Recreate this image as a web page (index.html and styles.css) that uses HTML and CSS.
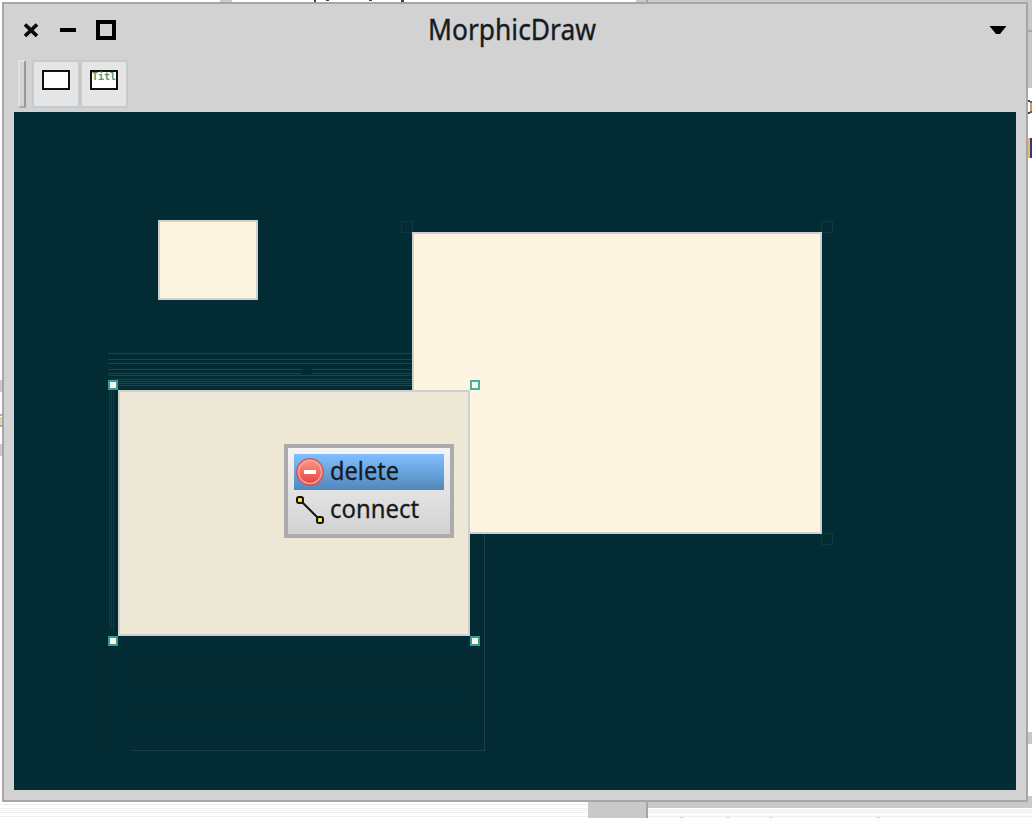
FILE: index.html
```html
<!DOCTYPE html>
<html lang="en">
<head>
<meta charset="utf-8">
<title>MorphicDraw</title>
<link rel="stylesheet" href="styles.css">
</head>
<body>
<main class="desktop">
  <svg class="backdrop" width="1032" height="818" shape-rendering="crispEdges">
    <path fill="#c9c9c9" d="M220 0h12v2h-12zM636 0h396v88h-396zM588 802h58v16h-58zM648 800h384v8h-384zM1028 796h4v12h-4zM1028 732h4v12h-4zM0 380h2v12h-2zM0 444h2v12h-2z"/>
    <path fill="#a6a6a6" d="M646 0h2v2h-2zM646 802h2v16h-2zM1028 30h4v2h-4z"/>
    <path fill="#fbfcfd" d="M648 808h384v10h-384z"/>
    <path fill="#efefef" d="M0 804h588v1H0zM0 808h588v1H0zM0 810h588v1H0zM0 812h588v1H0zM0 816h588v1H0zM648 810h384v1H648zM648 812h384v1H648zM648 816h384v1H648z"/>
    <path fill="#d5d9df" d="M680 817h4v1h-4zM726 817h4v1h-4zM769 817h4v1h-4zM876 817h4v1h-4z"/>
    <path fill="#39434c" d="M314 0h2v2h-2zM326 0h3v1h-3zM369 0h3v1h-3zM401 0h3v2h-3zM1028 100h2v2h-2zM1028 112h2v2h-2z"/>
    <path fill="#465f88" d="M1030 101h2v2h-2zM1030 111h2v2h-2z"/>
    <path fill="#a3adbb" d="M0 414h2v2H0zM0 425h2v2H0z"/>
    <path fill="#ce9860" d="M1030 103h2v8h-2z"/>
    <path fill="#ecd0a4" d="M0 417h2v8H0z"/>
    <path fill="#efb768" d="M1028 138h2v20h-2z"/>
    <path fill="#343779" d="M1030 138h2v20h-2z"/>
  </svg>

  <section class="window">
    <header class="titlebar">
      <div class="controls">
        <svg width="16" height="16" viewBox="0 0 16 16"><path d="M2 2.5l12 11.5M14 2.5L2 14" stroke="#0a0a0a" stroke-width="3.8"/></svg>
        <svg width="16" height="16" viewBox="0 0 16 16"><path d="M0 8h16" stroke="#000" stroke-width="4"/></svg>
        <svg width="20" height="20" viewBox="0 0 20 20"><rect x="2" y="2" width="16" height="16" fill="none" stroke="#000" stroke-width="4"/></svg>
      </div>
      <svg class="title" width="174" height="44"><text x="1" y="32" textLength="168" lengthAdjust="spacingAndGlyphs">MorphicDraw</text></svg>
      <svg class="arrow" width="18" height="9" viewBox="0 0 18 9"><path d="M.5 0h17L11 8H7z"/></svg>
    </header>
    <nav class="toolbar">
      <span class="grip"></span>
      <button class="tool active" aria-label="Rectangle">
        <svg width="28" height="20"><rect x="1" y="1" width="26" height="18" fill="#fff" stroke="#111" stroke-width="2"/></svg>
      </button>
      <button class="tool" aria-label="Titled rectangle">
        <svg width="28" height="20"><rect x="1" y="1" width="26" height="18" fill="#fff" stroke="#111" stroke-width="2"/><text class="mini" x="2" y="10" textLength="24" lengthAdjust="spacing">Titl</text></svg>
      </button>
    </nav>

    <div class="canvas">
      <svg class="trails" width="1002" height="678" viewBox="14 112 1002 678" fill="none" shape-rendering="crispEdges">
        <path stroke="#214247" d="M108 353.5H412M108 359.5H412M108 363.5H412M108 369.5H302M312 369.5H412M108 373.5H302M312 373.5H412M108 375.5H412M110 379.5H412M118 381.5H412M118 383.5H412M118 385.5H412"/>
        <path stroke="#173b42" d="M109.5 390V626M111.5 390V628M113.5 390V630"/>
        <path stroke="#1b414a" d="M484.5 534V750.5M484.5 750.5H132"/>
        <path stroke="#05282f" d="M472.5 653V714.5H132M132 666.5H472M132 670.5H472M132 684.5H472M132 706.5H472M108.5 648V750"/>
        <path stroke="#073b41" d="M401.5 221.5h11v11h-11zM821.5 221.5h11v11h-11zM821.5 533.5h11v11h-11z"/>
      </svg>
      <div class="shape small"></div>
      <div class="shape large"></div>
      <div class="shape selected"></div>
      <i class="handle top left"></i><i class="handle top right clear"></i>
      <i class="handle bottom left"></i><i class="handle bottom right"></i>

      <div class="menu" role="menu">
        <div class="item highlighted" role="menuitem">
          <svg width="32" height="36">
            <defs><linearGradient id="stop" x2="0" y2="1"><stop stop-color="#ff9a86"/><stop offset="1" stop-color="#e33e3e"/></linearGradient></defs>
            <circle cx="16" cy="18" r="13.3" fill="url(#stop)" stroke="#c9585d" stroke-width="1.3"/><circle cx="16" cy="18" r="11.5" fill="none" stroke="#f5a29c" stroke-width="1.5"/><path d="M10 18h12" stroke="#fff" stroke-width="4"/>
          </svg>
          <svg class="label" width="100" height="36"><text x="4" y="26" textLength="69" lengthAdjust="spacingAndGlyphs">delete</text></svg>
        </div>
        <div class="item" role="menuitem">
          <svg width="32" height="36"><path d="M6 8l20 20" stroke="#111" stroke-width="2"/><rect x="3" y="5" width="6" height="6" rx="2" fill="#f6e52b" stroke="#111" stroke-width="2"/><rect x="23" y="25" width="6" height="6" rx="2" fill="#f6e52b" stroke="#111" stroke-width="2"/></svg>
          <svg class="label" width="100" height="36"><text x="4" y="26" textLength="89" lengthAdjust="spacingAndGlyphs">connect</text></svg>
        </div>
      </div>
    </div>
  </section>
</main>
</body>
</html>
```
FILE: styles.css
```css
* { box-sizing: border-box; }
body { margin: 0; background: #fff; font-family: "Noto Sans", "Open Sans", sans-serif; }
svg { display: block; }
.desktop { position: relative; width: 1032px; height: 818px; overflow: hidden; background: #fff; }
.backdrop { position: absolute; inset: 0; }
.window { position: absolute; left: 2px; top: 2px; width: 1026px; height: 800px; border: 2px solid #a6a6a6; background: #d2d2d2; padding: 0 10px 10px; display: flex; flex-direction: column; }
.titlebar { height: 54px; flex: none; display: grid; grid-template-columns: 1fr auto 1fr; align-items: center; padding: 0 9px 2px; }
.controls { display: flex; align-items: center; gap: 21px; }
.controls svg:last-child { margin-left: -1px; }
.title { margin-right: 2px; }
.title text { font-size: 28.5px; fill: #171a22; stroke: #171a22; stroke-width: .35px; }
.arrow { justify-self: end; }
.toolbar { height: 54px; flex: none; display: flex; padding: 2px 0 4px 4px; }
.grip { width: 8px; height: 48px; margin-right: 6px; border: 2px solid #e0e0e0; border-right-color: #999; border-bottom-color: #aaa; background: #d2d2d2; }
.tool { width: 48px; height: 48px; padding: 8px 8px 0; border: 2px solid #c9c9c9; background: #e5e5e5; display: flex; align-items: flex-start; justify-content: center; }
.tool.active { border-color: #c3cbd2; }
.mini { font: bold 10px "DejaVu Sans Mono", monospace; fill: #56986f; }
.canvas { position: relative; flex: 1; background: #032b34; }
.trails { position: absolute; inset: 0; }
.shape { position: absolute; border: 2px solid #ced0d0; background: #fdf5e2; }
.small { left: 144px; top: 108px; width: 100px; height: 80px; }
.large { left: 398px; top: 120px; width: 410px; height: 302px; }
.selected { left: 104px; top: 278px; width: 352px; height: 246px; background: #eee8d6; }
.handle { position: absolute; width: 10px; height: 10px; border: 2px solid #329d90; background: #fdf5e2; }
.handle.top { top: 268px; }
.handle.bottom { top: 524px; }
.handle.left { left: 94px; }
.handle.right { left: 456px; }
.handle.clear { border-color: #45b0a3; }
.menu { position: absolute; left: 270px; top: 332px; width: 170px; height: 94px; border: 4px solid #acacac; background: linear-gradient(#f4f4f4, #d2d2d2); padding: 6px; display: flex; flex-direction: column; gap: 2px; }
.item { display: flex; height: 36px; }
.highlighted { background: linear-gradient(#80beff, #5288bb); }
.label text { font-size: 25.5px; fill: #171a22; stroke: #171a22; stroke-width: .3px; }
```
